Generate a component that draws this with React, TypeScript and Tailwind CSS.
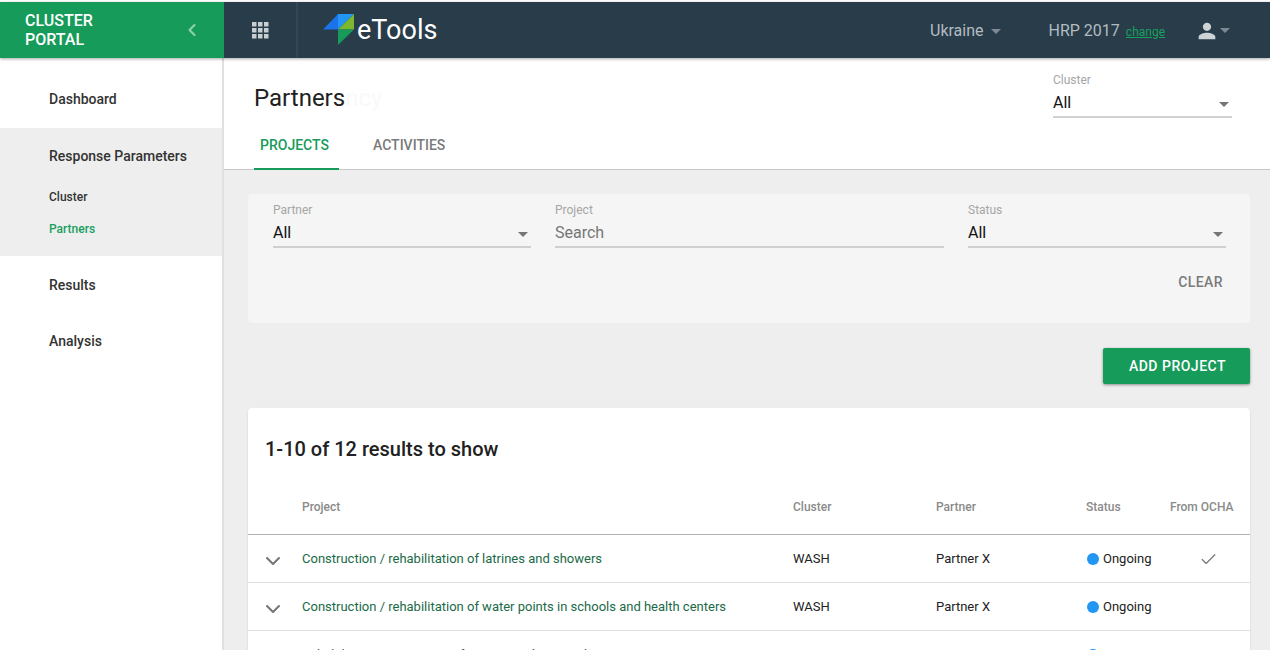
import { Check, ChevronDown, ChevronLeft } from "lucide-react";

type Project = {
	name: string;
	fromOcha: boolean;
};

const projects: Project[] = [
	{ name: "Construction / rehabilitation of latrines and showers", fromOcha: true },
	{ name: "Construction / rehabilitation of water points in schools and health centers", fromOcha: false },
	{ name: "Rehabilitation / extension of water supply networks", fromOcha: true },
];

const rowGrid = "grid grid-cols-[54px_491px_143px_150px_84px_1fr]";

function Caret({ className = "" }: { className?: string }) {
	return (
		<span
			className={`h-0 w-0 border-x-[5px] border-t-[5px] border-x-transparent ${className}`}
		/>
	);
}

function SelectField({ label, width }: { label: string; width: string }) {
	return (
		<div className={width}>
			<div className="h-[14px] text-xs leading-[14px] text-[#a6a6a6]">{label}</div>
			<div className="flex h-[31px] items-center justify-between border-b-2 border-[#d0d0d0] pt-[2px] pr-[3px] text-base text-[#111]">
				<span>All</span>
				<Caret className="mt-[4px] border-t-[#757575]" />
			</div>
		</div>
	);
}

function GridIcon() {
	return (
		<svg width="18" height="18" viewBox="0 0 18 18" fill="#c9ced2">
			{[1, 7, 13].map((y) =>
				[1, 7, 13].map((x) => <rect key={`${x}-${y}`} x={x} y={y} width="4.5" height="4.5" />),
			)}
		</svg>
	);
}

function Logo() {
	return (
		<svg width="32" height="32" viewBox="0 0 32 32">
			<polygon points="0,15.5 15,0 15,15.5" fill="#1a73e8" />
			<polygon points="15,0 31,0 15,15.5" fill="#2196f3" />
			<polygon points="31,0 31,15.5 15,15.5" fill="#7cb82f" />
			<polygon points="15,15.5 31,15.5 15,31" fill="#169b5a" />
		</svg>
	);
}

function Sidebar() {
	return (
		<aside className="w-[224px] shrink-0 border-r-2 border-[#e0e0e0] bg-white text-sm font-medium text-[#333]">
			<div className="flex h-[70px] items-center pl-[49px] pt-[12px]">Dashboard</div>
			<div className="h-[128px] bg-[#eeeeee] pl-[49px]">
				<div className="flex h-[56px] items-center">Response Parameters</div>
				<div className="mt-[1px] flex h-[24px] items-center text-xs">Cluster</div>
				<div className="mt-[8px] flex h-[24px] items-center text-xs text-[#17a05e]">Partners</div>
			</div>
			<div className="flex h-[58px] items-center pl-[49px]">Results</div>
			<div className="flex h-[54px] items-center pl-[49px]">Analysis</div>
		</aside>
	);
}

function ProjectRow({ project }: { project: Project }) {
	return (
		<div className={`${rowGrid} h-[48px] items-center border-b border-[#e0e0e0] pt-[1px] text-[13px] text-[#212121]`}>
			<ChevronDown className="ml-[13px] mt-[3px] text-[#757575]" size={24} strokeWidth={2} />
			<a className="text-[#1a6a47]">{project.name}</a>
			<span>WASH</span>
			<span>Partner X</span>
			<span className="flex items-center gap-[4px]">
				<span className="ml-[1px] h-[12px] w-[12px] rounded-full bg-[#2196f3]" />
				Ongoing
			</span>
			<span className="pl-[29px]">
				{project.fromOcha && <Check className="text-[#757575]" size={19} strokeWidth={1.5} />}
			</span>
		</div>
	);
}

export default function App() {
	return (
		<div
			className="flex h-screen flex-col overflow-hidden bg-white pt-[2px]"
			style={{ fontFamily: "Roboto, sans-serif" }}
		>
			<header className="relative z-10 flex h-[56px] shrink-0 shadow-[0_1px_3px_rgba(0,0,0,0.35)]">
				<div className="flex w-[224px] items-center justify-between bg-[#169b5a] pl-[25px] pr-[22px]">
					<div className="text-base leading-[19px] font-medium text-white">
						CLUSTER
						<br />
						PORTAL
					</div>
					<ChevronLeft className="text-[#8fd3b0]" size={20} strokeWidth={2.5} />
				</div>
				<div className="flex flex-1 items-center bg-[#283c4a]">
					<div className="flex h-full w-[74px] items-center justify-center border-r-2 border-[#324755]">
						<GridIcon />
					</div>
					<div className="ml-[25px] flex items-center">
						<Logo />
						<span className="ml-[2px] mt-[1px] text-[27px] text-white">eTools</span>
					</div>
					<div className="ml-auto flex items-center pr-[40px] pt-[1px] text-base text-[#b3bbc0]">
						<span>Ukraine</span>
						<Caret className="ml-[7px] mt-[1px] border-t-[#7d8a93]" />
						<span className="ml-[48px]">HRP 2017</span>
						<a className="ml-[6px] mt-[2px] text-xs text-[#17a05e] underline">change</a>
						<svg className="ml-[32px]" width="20" height="20" viewBox="0 0 24 24" fill="#ced3d6">
							<path d="M12 12c2.7 0 5-2.3 5-5s-2.3-5-5-5-5 2.3-5 5 2.3 5 5 5zm0 2c-3.3 0-10 1.7-10 5v3h20v-3c0-3.3-6.7-5-10-5z" />
						</svg>
						<Caret className="ml-[3px] border-t-[#7d8a93]" />
					</div>
				</div>
			</header>

			<div className="flex min-h-0 flex-1">
				<Sidebar />

				<main className="min-w-0 flex-1 bg-[#eeeeee]">
					<section className="h-[112px] border-b border-[#c8c8c8] bg-white pl-[30px] pr-[38px]">
						<div className="flex h-[70px] items-start justify-between">
							<h1 className="mt-[24px] text-2xl leading-[32px] text-[#212121]">
								Partners
								<span className="text-[#f8f9fa]">ncy</span>
							</h1>
							<SelectField label="Cluster" width="mt-[15px] w-[179px]" />
						</div>
						<nav className="flex h-[42px] text-sm font-medium">
							<a className="flex h-[42px] w-[85px] items-center border-b-2 border-[#169b5a] pb-[6px] pl-[6px] text-[#169b5a]">
								PROJECTS
							</a>
							<a className="ml-[34px] flex h-[42px] items-center pb-[8px] text-[#7a7a7a]">
								ACTIVITIES
							</a>
						</nav>
					</section>

					<div className="pl-[24px] pr-[20px] pt-[24px]">
						<section className="h-[129px] rounded-sm bg-[#f5f5f5] pl-[25px] pr-[24px] pt-[9px]">
							<div className="flex gap-[24px]">
								<SelectField label="Partner" width="w-[258px]" />
								<div className="w-[389px]">
									<div className="h-[14px] text-xs leading-[14px] text-[#a6a6a6]">Project</div>
									<div className="flex h-[31px] items-center border-b-2 border-[#d0d0d0] pt-[2px] text-base text-[#757575]">
										Search
									</div>
								</div>
								<SelectField label="Status" width="w-[258px]" />
							</div>
							<div className="mt-[24px] pr-[3px] text-right text-sm leading-[20px] font-medium tracking-[0.4px] text-[#7a7a7a]">
								CLEAR
							</div>
						</section>

						<div className="mt-[25px] flex justify-end">
							<button className="h-[36px] w-[147px] rounded-[2px] bg-[#169b5a] pl-[2px] text-sm font-medium tracking-[0.5px] text-white shadow-[0_1px_3px_rgba(0,0,0,0.4)]">
								ADD PROJECT
							</button>
						</div>

						<section className="mt-[24px] rounded-sm bg-white shadow-[0_1px_2px_rgba(0,0,0,0.15)]">
							<h2 className="flex h-[81px] items-center pl-[17px] text-xl font-medium text-[#212121]">
								1-10 of 12 results to show
							</h2>
							<div className={`${rowGrid} h-[46px] items-center border-b border-[#b0b0b0] pb-[9px] text-xs font-medium text-[#8a8a8a]`}>
								<span />
								<span>Project</span>
								<span>Cluster</span>
								<span>Partner</span>
								<span>Status</span>
								<span>From OCHA</span>
							</div>
							{projects.map((project) => (
								<ProjectRow key={project.name} project={project} />
							))}
						</section>
					</div>
				</main>
			</div>
		</div>
	);
}
